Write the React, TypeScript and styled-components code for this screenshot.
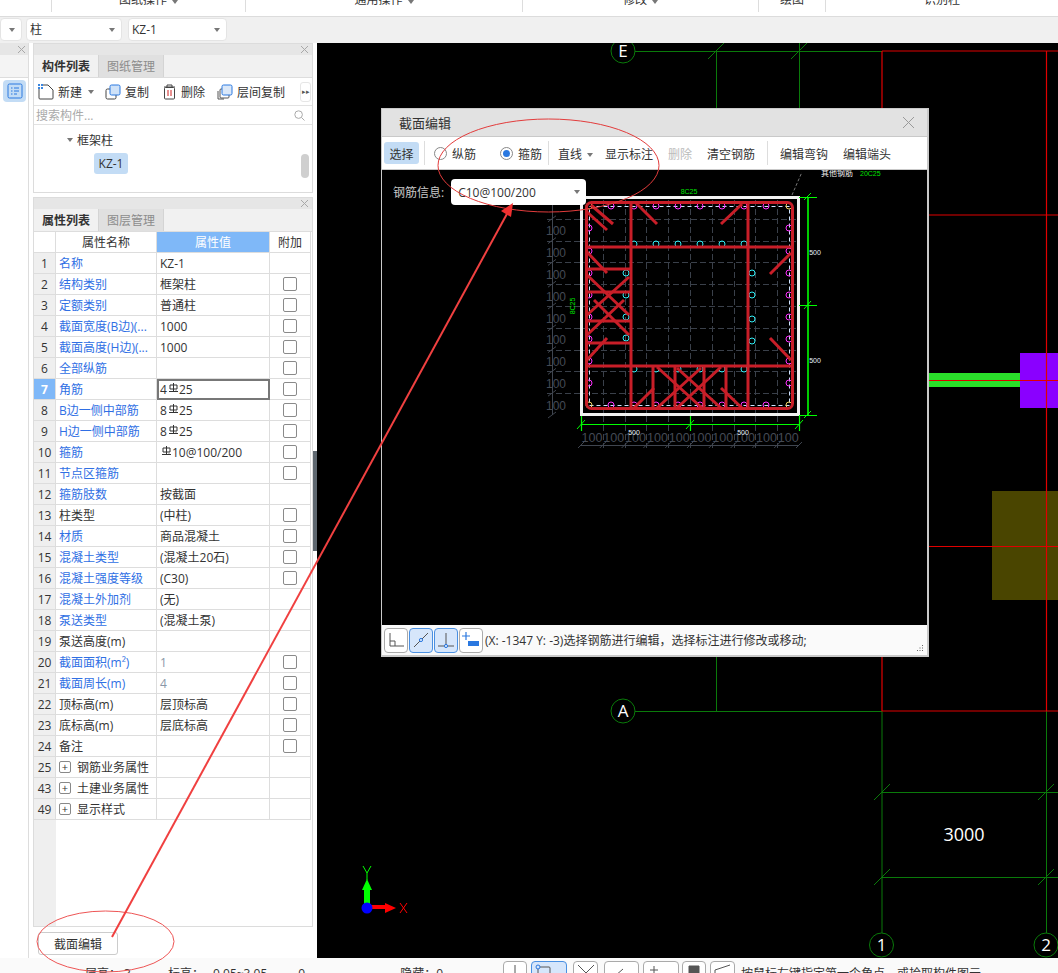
import React from "react";
import styled, { createGlobalStyle } from "styled-components";

const Global = createGlobalStyle`
  html, body { margin: 0; padding: 0; background: #fff; overflow: hidden; }
  * { box-sizing: border-box; }
  #root { width: 1058px; height: 973px; }
`;

const FONT = `"Open Sans", "Noto Sans CJK SC", sans-serif`;

const Page = styled.div`
  position: relative;
  width: 1058px;
  height: 973px;
  overflow: hidden;
  display: flex;
  flex-direction: column;
  font: 12px/18px ${FONT};
  color: #333;
  background: #fff;
`;

/* ---- ribbon ---- */
const Ribbon = styled.div`
  flex: 0 0 17px;
  display: flex;
  background: #fff;
  border-bottom: 1px solid #dcdcdc;
  overflow: hidden;
`;
const RibbonGroup = styled.div<{ $w: number }>`
  flex: 0 0 ${(p) => p.$w}px;
  height: 12px;
  border-right: 1px solid #ddd;
  display: flex;
  justify-content: center;
  gap: 5px;
  line-height: 14px;
  & > span { margin-top: -7px; white-space: nowrap; }
  &:last-child { border-right: none; }
`;
const Caret = styled.i`
  display: inline-block;
  width: 0;
  height: 0;
  border-left: 3px solid transparent;
  border-right: 3px solid transparent;
  border-top: 4px solid #777;
`;

/* ---- selector bar ---- */
const SelectorBar = styled.div`
  flex: 0 0 26px;
  display: flex;
  gap: 4px;
  padding-top: 1px;
  background: #f0f0f0;
`;
const Combo = styled.div<{ $w: number; $ml?: number }>`
  flex: 0 0 ${(p) => p.$w}px;
  margin-left: ${(p) => p.$ml ?? 0}px;
  height: 23px;
  background: #fff;
  border: 1px solid #e4e4e4;
  border-radius: 4px;
  display: flex;
  align-items: center;
  justify-content: space-between;
  padding: 0 6px 0 3px;
`;

/* ---- main ---- */
const Main = styled.div`
  flex: 0 0 915px;
  display: flex;
  min-height: 0;
`;
const Rail = styled.div`
  flex: 0 0 29px;
  border-right: 1px solid #ddd;
  display: flex;
  flex-direction: column;
`;
const RailHead = styled.div`
  height: 12px;
  background: #e6e6e6;
  display: flex;
  justify-content: flex-end;
  align-items: center;
  padding-right: 3px;
`;
const RailStrip = styled.div`
  height: 23px;
  background: #f4f4f4;
  border-bottom: 1px solid #ddd;
`;
const RailButton = styled.div`
  width: 23px;
  height: 22px;
  margin: 2px 0 0 3px;
  border-radius: 4px;
  background: #c3dcf5;
  display: flex;
  align-items: center;
  justify-content: center;
`;
const PanelColumn = styled.div`
  flex: 0 0 284px;
  padding-left: 4px;
  display: flex;
  flex-direction: column;
  gap: 4px;
`;
const Panel = styled.div<{ $h: number }>`
  flex: 0 0 ${(p) => p.$h}px;
  width: 280px;
  border: 1px solid #dcdcdc;
  display: flex;
  flex-direction: column;
  background: #fff;
  overflow: hidden;
`;
const PanelHead = styled.div`
  flex: 0 0 11px;
  background: #e6e6e6;
  display: flex;
  align-items: center;
  justify-content: flex-end;
  padding-right: 4px;
`;
const Tabs = styled.div`
  flex: 0 0 23px;
  height: 23px;
  display: flex;
  background: #f1f1f1;
  border-bottom: 1px solid #ddd;
`;
const Tab = styled.div<{ $on?: boolean }>`
  width: 65px;
  height: 22px;
  overflow: hidden;
  text-align: center;
  line-height: 24px;
  font-weight: ${(p) => (p.$on ? 700 : 400)};
  color: ${(p) => (p.$on ? "#333" : "#8c8c8c")};
  background: ${(p) => (p.$on ? "#f1f1f1" : "#e0e0e0")};
  border-right: 1px solid #d4d4d4;
`;
const Tools = styled.div`
  flex: 0 0 28px;
  display: flex;
  align-items: center;
  padding-left: 4px;
  border-bottom: 1px solid #e2e2e2;
  white-space: nowrap;
`;
const Tool = styled.div<{ $w: number }>`
  flex: 0 0 ${(p) => p.$w}px;
  display: flex;
  align-items: center;
  gap: 4px;
  & > span { padding-top: 2px; }
`;
const More = styled.div`
  width: 11px;
  height: 20px;
  margin-left: 11px;
  border: 1px solid #e6e6e6;
  border-radius: 3px;
  display: flex;
  align-items: center;
  justify-content: center;
  font-size: 7px;
  color: #555;
`;
const SearchRow = styled.div`
  flex: 0 0 19px;
  height: 19px;
  overflow: hidden;
  display: flex;
  align-items: center;
  justify-content: space-between;
  padding: 0 7px 0 2px;
  color: #aaa;
  border-bottom: 1px solid #e2e2e2;
  & > span { padding-top: 2px; line-height: 16px; }
`;
const Tree = styled.div`
  flex: 1;
  position: relative;
  padding: 5px 0 0 33px;
`;
const TreeNode = styled.div`
  display: flex;
  align-items: center;
  gap: 4px;
  height: 19px;
  & > span { padding-top: 2px; }
`;
const TreeLeaf = styled.div`
  width: 34px;
  height: 21px;
  margin: 4px 0 0 27px;
  border-radius: 3px;
  background: #c3dcf5;
  text-align: center;
  line-height: 22px;
`;
const Thumb = styled.div`
  position: absolute;
  right: 3px;
  top: 29px;
  width: 8px;
  height: 24px;
  border-radius: 4px;
  background: #cfcfcf;
`;

/* ---- grid ---- */
const Sheet = styled.div`
  flex: 1;
  display: flex;
  flex-direction: column;
  width: 277px;
`;
const SheetRow = styled.div`
  display: grid;
  grid-template-columns: 22px 101px 113px 41px;
  grid-template-rows: 21px;
  height: 21px;
  flex: 0 0 21px;
`;
const Cell = styled.div<{ $color?: string }>`
  border-right: 1px solid #ddd;
  border-bottom: 1px solid #ddd;
  padding: 2px 0 0 3px;
  line-height: 18px;
  white-space: nowrap;
  overflow: hidden;
  display: flex;
  align-items: center;
  color: ${(p) => p.$color ?? "#333"};
`;
const NumCell = styled(Cell)<{ $on?: boolean }>`
  padding: 2px 0 0;
  justify-content: center;
  background: ${(p) => (p.$on ? "#7fb8f8" : "#efefef")};
  color: ${(p) => (p.$on ? "#fff" : "#333")};
  font-weight: ${(p) => (p.$on ? 700 : 400)};
`;
const HeadCell = styled(Cell)<{ $on?: boolean }>`
  padding: 2px 0 0;
  justify-content: center;
  background: ${(p) => (p.$on ? "#7fb8f8" : "#fff")};
  color: ${(p) => (p.$on ? "#fff" : "#333")};
`;
const ValueCell = styled(Cell)<{ $sel?: boolean }>`
  ${(p) => (p.$sel ? "outline: 2px solid #777; outline-offset: -2px;" : "")}
`;
const CheckCell = styled(Cell)`
  padding: 0;
  justify-content: center;
`;
const Check = styled.div`
  width: 14px;
  height: 14px;
  border: 1px solid #8a8a8a;
  border-radius: 2px;
  background: #fff;
`;
const PlusBox = styled.span`
  width: 12px;
  height: 12px;
  margin: -2px 6px 0 0;
  border: 1px solid #888;
  border-radius: 2px;
  display: inline-flex;
  align-items: center;
  justify-content: center;
  font-size: 11px;
  line-height: 10px;
  flex: none;
`;
const SheetFill = styled.div`
  flex: 1;
  width: 22px;
  background: #efefef;
`;
const ActionButton = styled.div`
  width: 80px;
  height: 23px;
  margin-left: 5px;
  margin-top: 1px;
  border: 1px solid #ccc;
  border-radius: 3px;
  text-align: center;
  line-height: 23px;
  background: #fff;
`;
const SplitColumn = styled.div`
  flex: 0 0 4px;
  background: #fff;
  display: flex;
  align-items: flex-start;
`;
const SplitHandle = styled.div`
  width: 4px;
  height: 100px;
  margin-top: 408px;
  background: #5f6870;
`;

/* ---- canvas ---- */
const Canvas = styled.div`
  flex: 1;
  position: relative;
  background: #000;
  overflow: hidden;
`;
const Drawing = styled.svg`
  display: block;
`;

/* ---- dialog ---- */
const Dialog = styled.div`
  position: absolute;
  left: 64px;
  top: 65px;
  width: 548px;
  height: 549px;
  background: #c9c9c9;
  padding: 1px 2px 2px 1px;
  display: flex;
  flex-direction: column;
`;
const DialogTitle = styled.div`
  flex: 0 0 27px;
  background: #e2e2e2;
  display: flex;
  align-items: center;
  justify-content: space-between;
  padding: 0 13px 0 17px;
  font-size: 13px;
`;
const DialogTools = styled.div`
  flex: 0 0 33px;
  margin-top: 1px;
  background: #fff;
  border-bottom: 1px solid #c9c9c9;
  display: flex;
  align-items: center;
  padding-left: 2px;
  white-space: nowrap;
`;
const PickButton = styled.div`
  width: 35px;
  height: 22px;
  overflow: hidden;
  border-radius: 3px;
  background: #c3dcf5;
  text-align: center;
  line-height: 25px;
`;
const ToolSep = styled.div<{ $ml: number }>`
  width: 1px;
  height: 24px;
  margin-left: ${(p) => p.$ml}px;
  background: #ddd;
`;
const Radio = styled.span<{ $on?: boolean }>`
  width: 13px;
  height: 13px;
  border: 1px solid #888;
  border-radius: 50%;
  display: inline-flex;
  align-items: center;
  justify-content: center;
  background: #fff;
  &::after {
    content: "";
    width: 7px;
    height: 7px;
    border-radius: 50%;
    background: ${(p) => (p.$on ? "#2a78e0" : "transparent")};
  }
`;
const RadioLabel = styled.div<{ $ml: number }>`
  margin-left: ${(p) => p.$ml}px;
  display: flex;
  align-items: center;
  gap: 5px;
  & > span:last-child { padding-top: 3px; }
`;
const DialogText = styled.div<{ $ml: number; $off?: boolean }>`
  margin-left: ${(p) => p.$ml}px;
  padding-top: 3px;
  color: ${(p) => (p.$off ? "#bbb" : "#333")};
  display: flex;
  align-items: center;
  gap: 5px;
`;
const DialogStage = styled.div`
  flex: 0 0 455px;
  position: relative;
  background: #000;
`;
const RebarInfo = styled.div`
  position: absolute;
  left: 11px;
  top: 9px;
  display: flex;
  align-items: center;
  gap: 7px;
  color: #c8c8c8;
  & span { padding-top: 2px; }
`;
const RebarCombo = styled.div`
  width: 135px;
  height: 26px;
  background: #fff;
  border-radius: 4px;
  color: #333;
  display: flex;
  align-items: center;
  justify-content: space-between;
  padding: 0 6px 0 7px;
`;
const DialogFoot = styled.div`
  flex: 1;
  background: #fafafa;
  display: flex;
  align-items: center;
  gap: 1px;
  padding-left: 2px;
  position: relative;
  white-space: nowrap;
`;
const SnapButton = styled.div<{ $on?: boolean }>`
  width: 24px;
  height: 25px;
  border: 1px solid ${(p) => (p.$on ? "#4a90e2" : "#aaa")};
  border-radius: 4px;
  background: ${(p) => (p.$on ? "#d6e6fb" : "#fff")};
  display: flex;
  align-items: center;
  justify-content: center;
`;
const FootText = styled.div`
  margin-left: 1px;
  padding-top: 2px;
`;
const Grip = styled.svg`
  position: absolute;
  right: 3px;
  bottom: 3px;
`;

/* ---- status ---- */
const StatusBar = styled.div`
  flex: 0 0 15px;
  background: #fafafa;
  display: flex;
  align-items: flex-start;
  overflow: hidden;
  white-space: nowrap;
`;
const StatusText = styled.div<{ $ml: number }>`
  margin: 7px 0 0 ${(p) => p.$ml}px;
  line-height: 18px;
`;
const StatusTool = styled.div<{ $w: number; $ml: number; $on?: boolean }>`
  flex: 0 0 ${(p) => p.$w}px;
  height: 24px;
  margin: 3px 0 0 ${(p) => p.$ml}px;
  border: 1px solid ${(p) => (p.$on ? "#4a90e2" : "#aaa")};
  border-radius: 4px;
  background: ${(p) => (p.$on ? "#d6e6fb" : "#fff")};
  display: flex;
  justify-content: center;
  padding-top: 2px;
`;

const Overlay = styled.svg`
  position: absolute;
  left: 0;
  top: 0;
  pointer-events: none;
`;

/* ---- small icons ---- */
const Close = ({ s = 7, c = "#a8a8a8" }: { s?: number; c?: string }) => (
  <svg width={s} height={s} viewBox="0 0 7 7">
    <path d="M0 0L7 7M7 0L0 7" stroke={c} strokeWidth={7 / s} fill="none" />
  </svg>
);
const NewIcon = () => (
  <svg width="16" height="16" viewBox="0 0 16 16">
    <path d="M1 5V14a1 1 0 0 0 1 1H14a1 1 0 0 0 1-1V6L10 1H5" fill="#fff" stroke="#444" />
    <rect x="0" y="0" width="5" height="5" fill="#3a86e0" />
    <path d="M0 2.5H5M2.5 0V5" stroke="#fff" />
  </svg>
);
const CopyIcon = () => (
  <svg width="16" height="16" viewBox="0 0 16 16">
    <rect x="1" y="5" width="10" height="10" rx="1.5" fill="#fff" stroke="#444" />
    <rect x="5" y="1" width="10" height="10" rx="1.5" fill="#cfe2f8" stroke="#2a78e0" />
  </svg>
);
const TrashIcon = () => (
  <svg width="14" height="16" viewBox="0 0 14 16">
    <path d="M1 3H12M4 3V1H9V3" fill="none" stroke="#444" />
    <rect x="1.5" y="3.5" width="10" height="11.5" rx="1" fill="#fff" stroke="#444" />
    <path d="M5 6V12M8 6V12" stroke="#d02020" />
  </svg>
);
const FloorCopyIcon = () => (
  <svg width="16" height="16" viewBox="0 0 16 16">
    <path d="M1 7V15H7" fill="none" stroke="#555" />
    <rect x="3" y="5" width="9" height="9" rx="1" fill="#fff" stroke="#555" />
    <rect x="5" y="1" width="10" height="10" rx="1.5" fill="#dbe8f8" stroke="#2a78e0" />
  </svg>
);
const ListIcon = () => (
  <svg width="16" height="16" viewBox="0 0 16 16">
    <rect x="1" y="1" width="14" height="14" rx="1.5" fill="none" stroke="#2a78e0" />
    <path d="M4 5H5.5M7 5H12M4 8H5.5M7 8H12M4 11H5.5M7 11H10" stroke="#2a78e0" />
  </svg>
);
const SearchIcon = () => (
  <svg width="11" height="11" viewBox="0 0 11 11">
    <circle cx="4.6" cy="4.6" r="3.8" fill="none" stroke="#aaa" />
    <path d="M7.5 7.5L10.5 10.5" stroke="#aaa" />
  </svg>
);
const Rebar = () => (
  <svg width="11" height="10" viewBox="0 0 11 10" style={{ margin: "-5px 0 0 1px", flex: "none" }}>
    <path d="M2 2H9V6H2ZM5.5 0V8.5M1 8.5H10M8 7.5L9.5 9" fill="none" stroke="#333" strokeWidth="1" />
  </svg>
);

const StatusIcon = ({ d, w = 16, caret, dot, fill }: { d: string; w?: number; caret?: boolean; dot?: boolean; fill?: string }) => (
  <svg width={w} height="14" viewBox={`0 0 ${w} 14`}>
    <path d={d} fill={fill ?? "none"} stroke="#555" />
    {dot && <circle cx="3" cy="3" r="2" fill="#d6e6fb" stroke="#2a78e0" />}
    {caret && <path d={`M${w - 6} 9H${w}L${w - 3} 12Z`} fill="#666" />}
  </svg>
);

/* ---- data ---- */
const BLUE = "#2f6fe4";
type Row = { n: number; name: string; blue?: boolean; val?: React.ReactNode; chk?: boolean; plus?: boolean; gray?: boolean; sel?: boolean };
const rb = (pre: string, post: string) => (
  <>
    {pre}
    <Rebar />
    {post}
  </>
);
const rows: Row[] = [
  { n: 1, name: "名称", blue: true, val: "KZ-1" },
  { n: 2, name: "结构类别", blue: true, val: "框架柱", chk: true },
  { n: 3, name: "定额类别", blue: true, val: "普通柱", chk: true },
  { n: 4, name: "截面宽度(B边)(...", blue: true, val: "1000", chk: true },
  { n: 5, name: "截面高度(H边)(...", blue: true, val: "1000", chk: true },
  { n: 6, name: "全部纵筋", blue: true, chk: true },
  { n: 7, name: "角筋", blue: true, val: rb("4", "25"), chk: true, sel: true },
  { n: 8, name: "B边一侧中部筋", blue: true, val: rb("8", "25"), chk: true },
  { n: 9, name: "H边一侧中部筋", blue: true, val: rb("8", "25"), chk: true },
  { n: 10, name: "箍筋", blue: true, val: rb("", "10@100/200"), chk: true },
  { n: 11, name: "节点区箍筋", blue: true, chk: true },
  { n: 12, name: "箍筋肢数", blue: true, val: "按截面" },
  { n: 13, name: "柱类型", val: "(中柱)", chk: true },
  { n: 14, name: "材质", blue: true, val: "商品混凝土", chk: true },
  { n: 15, name: "混凝土类型", blue: true, val: "(混凝土20石)", chk: true },
  { n: 16, name: "混凝土强度等级", blue: true, val: "(C30)", chk: true },
  { n: 17, name: "混凝土外加剂", blue: true, val: "(无)" },
  { n: 18, name: "泵送类型", blue: true, val: "(混凝土泵)" },
  { n: 19, name: "泵送高度(m)" },
  { n: 20, name: "截面面积(m²)", blue: true, val: "1", gray: true, chk: true },
  { n: 21, name: "截面周长(m)", blue: true, val: "4", gray: true, chk: true },
  { n: 22, name: "顶标高(m)", val: "层顶标高", chk: true },
  { n: 23, name: "底标高(m)", val: "层底标高", chk: true },
  { n: 24, name: "备注", chk: true },
  { n: 25, name: "钢筋业务属性", plus: true },
  { n: 43, name: "土建业务属性", plus: true },
  { n: 49, name: "显示样式", plus: true },
];

const GREEN = "#0a7a0a";
const RED = "#e00000";

const AxisBubble = ({ x, y, t, size = 17 }: { x: number; y: number; t: string; size?: number }) => (
  <g>
    <circle cx={x} cy={y} r={12} fill="#000" stroke={GREEN} strokeWidth="1" />
    <text x={x} y={y + 6} fontSize={size} fill="#fff" textAnchor="middle" fontFamily="Open Sans, sans-serif">
      {t}
    </text>
  </g>
);

const Slash = ({ x, y }: { x: number; y: number }) => (
  <path d={`M${x - 8} ${y + 8}L${x + 8} ${y - 8}`} stroke={GREEN} strokeWidth="1" />
);

const CadDrawing = () => (
  <Drawing width="741" height="915" viewBox="317 43 741 915">
    <g strokeWidth="1" fill="none">
      <path d={`M634 51.5H882M716.5 51V108M799.5 43V108M716.5 656V711M634 711.5H882M882 711V935M1046.5 711V935`} stroke={GREEN} />
      <path d="M882 792.5H1058M882 877.5H1058" stroke={GREEN} />
    </g>
    <Slash x={882} y={792} />
    <Slash x={1046} y={792} />
    <Slash x={882} y={877} />
    <Slash x={1046} y={877} />
    <Slash x={716} y={51} />
    <Slash x={799} y={51} />
    <rect x="929" y="373" width="91" height="14" fill="#2adf2a" />
    <rect x="1020" y="353" width="38" height="55" fill="#8a00ff" />
    <rect x="992" y="491" width="66" height="109" fill="#4a4500" />
    <g stroke={RED} fill="none" strokeWidth="1">
      <path d="M882 51H1058M882 51V108M882 656V711H1058" strokeWidth="1.2" />
      <path d="M1046.5 51V711" strokeWidth="1.2" />
      <path d="M929 215H1058M929 380.5H1058M929 546.5H1058" />
    </g>
    <AxisBubble x={623} y={51} t="E" />
    <AxisBubble x={623} y={711} t="A" />
    <AxisBubble x={881.5} y={945} t="1" />
    <AxisBubble x={1046} y={945} t="2" />
    <text x="964" y="841" fontSize="18" fill="#fff" textAnchor="middle" fontFamily="Open Sans, sans-serif">
      3000
    </text>
    <path d="M367 907V887" stroke="#00ff00" strokeWidth="6" />
    <path d="M367 879L372 890H362Z" fill="#00ff00" />
    <path d="M367 907H386" stroke="#ff0000" strokeWidth="4" />
    <path d="M396 908L385 903V913Z" fill="#ff0000" />
    <circle cx="367" cy="908" r="5.5" fill="#0000ff" />
    <path d="M363 866L367 873L371 866M367 873V880" stroke="#00ff00" fill="none" />
    <path d="M400 903L407 913M407 903L400 913" stroke="#ff0000" fill="none" />
  </Drawing>
);

const STEEL = "#c81e28";
const gridV = Array.from({ length: 11 }, (_, i) => 582 + i * 21.8);
const gridH = Array.from({ length: 11 }, (_, i) => 197 + i * 21.8);
const perim = [612, 635, 657, 679, 701, 723, 745, 767];
const sideY = [228, 251, 273, 295, 317, 339, 361, 383];
const cyanX = [635, 657, 679, 701, 723, 745];
const steelLines: number[][] = [
  [632, 202, 632, 408], [749, 202, 749, 408], [587, 247, 793, 247], [587, 366, 793, 366],
  [587, 269, 632, 269], [587, 292, 632, 292], [587, 321, 632, 321], [587, 343, 632, 343],
  [588, 275, 630, 315], [630, 277, 588, 315], [595, 300, 630, 335], [588, 335, 625, 300],
  [592, 205, 614, 224], [588, 212, 608, 230], [637, 203, 658, 224], [743, 204, 722, 224],
  [588, 252, 608, 273], [792, 253, 771, 274], [608, 338, 588, 360], [771, 338, 792, 360],
  [655, 388, 635, 408], [722, 388, 743, 408], [654, 366, 654, 408], [676, 366, 676, 408],
  [705, 366, 705, 408], [727, 366, 727, 408], [658, 367, 703, 408], [722, 367, 678, 408],
  [658, 408, 702, 368], [678, 368, 722, 408],
];

const SectionDrawing = () => (
  <Drawing width="544" height="455" viewBox="383 170 544 455">
    <g stroke="#3a404a" strokeWidth="1" strokeDasharray="6 3" fill="none">
      {gridH.slice(1, 10).map((y) => (
        <path key={y} d={`M548 ${Math.round(y) + 0.5}H797`} />
      ))}
      {gridV.slice(1, 10).map((x) => (
        <path key={x} d={`M${Math.round(x) + 0.5} 200V448`} />
      ))}
    </g>
    <g stroke="#3f454f" strokeWidth="1" fill="none">
      <path d="M553.5 197V415M582 445.5H800" />
      {gridH.map((y) => (
        <path key={y} d={`M549 ${y + 3}L557 ${y - 3}`} />
      ))}
      {gridV.map((x) => (
        <path key={x} d={`M${x - 3} 448L${x + 3} 442`} />
      ))}
    </g>
    <g fill="#444a55" fontSize="13" fontFamily="Liberation Sans, sans-serif">
      {[230, 252, 274, 296, 318, 339, 361, 383, 405].map((y) => (
        <text key={y} x="547" y={y + 5} textLength="20" lengthAdjust="spacingAndGlyphs">
          100
        </text>
      ))}
      {gridV.slice(0, 10).map((x) => (
        <text key={x} x={x + 0.5} y="442" textLength="21" lengthAdjust="spacingAndGlyphs">
          100
        </text>
      ))}
    </g>
    <rect x="582.5" y="197.5" width="217" height="217" fill="none" stroke="#f2f2f2" strokeWidth="3" />
    <rect x="590.5" y="206.5" width="200" height="199" fill="none" stroke="#cfe4ff" strokeWidth="1" strokeDasharray="4 3" />
    <g fill="none" strokeWidth="1" stroke="#ff30ff">
      {perim.map((x) => (
        <React.Fragment key={x}>
          <circle cx={x} cy="206" r="3" />
          <circle cx={x} cy="405" r="3" />
        </React.Fragment>
      ))}
      {sideY.map((y) => (
        <React.Fragment key={y}>
          <circle cx="590" cy={y} r="3" />
          <circle cx="790" cy={y} r="3" />
        </React.Fragment>
      ))}
    </g>
    <g fill="none" strokeWidth="1" stroke="#30f0f8">
      {cyanX.map((x) => (
        <React.Fragment key={x}>
          <circle cx={x} cy="244" r="3" />
          <circle cx={x} cy="369" r="3" />
        </React.Fragment>
      ))}
      {[273, 295, 317, 338].map((y) => (
        <circle key={y} cx="627" cy={y} r="3" />
      ))}
      {[273, 295, 319, 341].map((y) => (
        <circle key={y} cx="753" cy={y} r="3" />
      ))}
    </g>
    <g fill="none" strokeWidth="1" stroke="#f0d060">
      <circle cx="590" cy="206" r="3" />
      <circle cx="790" cy="206" r="3" />
      <circle cx="590" cy="405" r="3" />
      <circle cx="790" cy="405" r="3" />
    </g>
    <rect x="587.5" y="202.5" width="206" height="206" rx="5" fill="none" stroke={STEEL} strokeWidth="3" />
    <g stroke={STEEL} strokeWidth="3">
      {steelLines.map((l, i) => (
        <line key={i} x1={l[0]} y1={l[1]} x2={l[2]} y2={l[3]} />
      ))}
    </g>
    <g stroke="#00ff00" fill="none">
      <path d="M809 197V415" strokeWidth="1.6" />
      <path d="M582 424.5H800M582.5 416V431M691.5 416V431M800.5 416V431M800 197.5H818M800 305.5H818M800 415.5H818" strokeWidth="1.2" />
      <path d="M578 429L586 420M687 429L695 420M796 429L804 420M805 200L812 193M805 309L812 301M805 418L812 411" strokeWidth="1" />
    </g>
    <path d="M793 195L803 172" stroke="#777" strokeDasharray="3 2" fill="none" />
    <g fontSize="7" fontFamily="Liberation Sans, sans-serif">
      <text x="690" y="194" fill="#00e000" textAnchor="middle">8C25</text>
      <text x="0" y="0" fill="#00e000" textAnchor="middle" transform="translate(576 306) rotate(-90)">8C25</text>
      <text x="816" y="255" fill="#e8f2ff" textAnchor="middle">500</text>
      <text x="816" y="363" fill="#e8f2ff" textAnchor="middle">500</text>
      <text x="635" y="435" fill="#e8f2ff" textAnchor="middle">500</text>
      <text x="744" y="435" fill="#e8f2ff" textAnchor="middle">500</text>
      <text x="861" y="176" fill="#00e000">20C25</text>
    </g>
    <text x="822" y="176" fontSize="8" fill="#f0f0f0" fontFamily={FONT}>其他钢筋</text>
  </Drawing>
);

const Snap1 = () => (
  <svg width="20" height="20" viewBox="0 0 20 20">
    <path d="M4 3V16H18M4 11H9V16" fill="none" stroke="#555" />
  </svg>
);
const Snap2 = () => (
  <svg width="20" height="20" viewBox="0 0 20 20">
    <path d="M3 17L17 3" fill="none" stroke="#555" />
    <circle cx="10" cy="10" r="1.6" fill="#d6e6fb" stroke="#2a78e0" />
  </svg>
);
const Snap3 = () => (
  <svg width="20" height="20" viewBox="0 0 20 20">
    <path d="M10 3V16M2 16H18" fill="none" stroke="#555" />
    <circle cx="10" cy="16" r="1.6" fill="#d6e6fb" stroke="#2a78e0" />
  </svg>
);
const Snap4 = () => (
  <svg width="20" height="20" viewBox="0 0 20 20">
    <path d="M1 6H9M5 2V10" stroke="#2a78e0" strokeWidth="1.2" fill="none" />
    <rect x="7" y="11" width="11" height="5" fill="#2a78e0" />
  </svg>
);

export default function App() {
  return (
    <Page>
      <Global />
      <Ribbon>
        <RibbonGroup $w={52} />
        <RibbonGroup $w={194}>
          <span>图纸操作</span>
          <Caret />
        </RibbonGroup>
        <RibbonGroup $w={277}>
          <span>通用操作</span>
          <Caret />
        </RibbonGroup>
        <RibbonGroup $w={236}>
          <span>修改</span>
          <Caret />
        </RibbonGroup>
        <RibbonGroup $w={67}>
          <span>绘图</span>
        </RibbonGroup>
        <RibbonGroup $w={232}>
          <span>识别柱</span>
        </RibbonGroup>
      </Ribbon>
      <SelectorBar>
        <Combo $w={22} $ml={0}>
          <span />
          <Caret />
        </Combo>
        <Combo $w={96}>
          <span>柱</span>
          <Caret />
        </Combo>
        <Combo $w={99} $ml={2}>
          <span>KZ-1</span>
          <Caret />
        </Combo>
      </SelectorBar>
      <Main>
        <Rail>
          <RailHead>
            <Close />
          </RailHead>
          <RailStrip />
          <RailButton>
            <ListIcon />
          </RailButton>
        </Rail>
        <PanelColumn>
          <Panel $h={150}>
            <PanelHead>
              <Close />
            </PanelHead>
            <Tabs>
              <Tab $on>构件列表</Tab>
              <Tab>图纸管理</Tab>
            </Tabs>
            <Tools>
              <Tool $w={67}>
                <NewIcon />
                <span>新建</span>
                <Caret style={{ marginLeft: 2 }} />
              </Tool>
              <Tool $w={58}>
                <CopyIcon />
                <span>复制</span>
              </Tool>
              <Tool $w={54}>
                <TrashIcon />
                <span>删除</span>
              </Tool>
              <Tool $w={72}>
                <FloorCopyIcon />
                <span>层间复制</span>
              </Tool>
              <More>▸▸</More>
            </Tools>
            <SearchRow>
              <span>搜索构件...</span>
              <SearchIcon />
            </SearchRow>
            <Tree>
              <TreeNode>
                <Caret />
                <span>框架柱</span>
              </TreeNode>
              <TreeLeaf>KZ-1</TreeLeaf>
              <Thumb />
            </Tree>
          </Panel>
          <Panel $h={730}>
            <PanelHead>
              <Close />
            </PanelHead>
            <Tabs>
              <Tab $on>属性列表</Tab>
              <Tab>图层管理</Tab>
            </Tabs>
            <Sheet>
              <SheetRow>
                <HeadCell />
                <HeadCell>属性名称</HeadCell>
                <HeadCell $on>属性值</HeadCell>
                <HeadCell>附加</HeadCell>
              </SheetRow>
              {rows.map((r) => (
                <SheetRow key={r.n}>
                  <NumCell $on={r.sel}>{r.n}</NumCell>
                  <Cell $color={r.blue ? BLUE : undefined}>
                    {r.plus && <PlusBox>+</PlusBox>}
                    {r.name}
                  </Cell>
                  <ValueCell $sel={r.sel} $color={r.gray ? "#8a97a8" : undefined}>
                    {r.val}
                  </ValueCell>
                  <CheckCell>{r.chk && <Check />}</CheckCell>
                </SheetRow>
              ))}
              <SheetFill />
            </Sheet>
          </Panel>
          <ActionButton>截面编辑</ActionButton>
        </PanelColumn>
        <SplitColumn>
          <SplitHandle />
        </SplitColumn>
        <Canvas>
          <CadDrawing />
          <Dialog>
            <DialogTitle>
              <span>截面编辑</span>
              <Close s={11} c="#999" />
            </DialogTitle>
            <DialogTools>
              <PickButton>选择</PickButton>
              <ToolSep $ml={5} />
              <RadioLabel $ml={9}>
                <Radio />
                <span>纵筋</span>
              </RadioLabel>
              <RadioLabel $ml={24}>
                <Radio $on />
                <span>箍筋</span>
              </RadioLabel>
              <ToolSep $ml={6} />
              <DialogText $ml={9}>
                <span>直线</span>
                <Caret />
              </DialogText>
              <DialogText $ml={12}>显示标注</DialogText>
              <DialogText $ml={15} $off>
                删除
              </DialogText>
              <DialogText $ml={15}>清空钢筋</DialogText>
              <ToolSep $ml={12} />
              <DialogText $ml={12}>编辑弯钩</DialogText>
              <DialogText $ml={15}>编辑端头</DialogText>
            </DialogTools>
            <DialogStage>
              <SectionDrawing />
              <RebarInfo>
                <span>钢筋信息:</span>
                <RebarCombo>
                  <span>C10@100/200</span>
                  <Caret />
                </RebarCombo>
              </RebarInfo>
            </DialogStage>
            <DialogFoot>
              <SnapButton>
                <Snap1 />
              </SnapButton>
              <SnapButton $on>
                <Snap2 />
              </SnapButton>
              <SnapButton $on>
                <Snap3 />
              </SnapButton>
              <SnapButton>
                <Snap4 />
              </SnapButton>
              <FootText>(X: -1347 Y: -3)选择钢筋进行编辑，选择标注进行修改或移动;</FootText>
              <Grip width="8" height="8" viewBox="0 0 8 8">
                <path d="M6 1h1v1H6zM3.5 3.5h1v1h-1zM6 3.5h1v1H6zM1 6h1v1H1zM3.5 6h1v1h-1zM6 6h1v1H6z" fill="#666" />
              </Grip>
            </DialogFoot>
          </Dialog>
        </Canvas>
      </Main>
      <StatusBar>
        <StatusText $ml={85}>层高： 3</StatusText>
        <StatusText $ml={37}>标高：</StatusText>
        <StatusText $ml={9}>0.05~3.05</StatusText>
        <StatusText $ml={31}>0</StatusText>
        <StatusText $ml={95}>隐藏：0</StatusText>
        <StatusTool $w={24} $ml={60}>
          <StatusIcon w={8} d="M4 1V14" />
        </StatusTool>
        <StatusTool $w={36} $ml={4} $on>
          <StatusIcon w={28} caret dot d="M3 3H14a1 1 0 0 1 1 1V14M3 3V14" />
        </StatusTool>
        <StatusTool $w={25} $ml={6}>
          <StatusIcon w={18} d="M1 1L9 9L17 1" />
        </StatusTool>
        <StatusTool $w={35} $ml={6}>
          <StatusIcon w={26} caret d="M6 12L14 5" />
        </StatusTool>
        <StatusTool $w={36} $ml={4}>
          <StatusIcon w={26} caret d="M6 2V10M2 6H10" />
        </StatusTool>
        <StatusTool $w={24} $ml={3}>
          <StatusIcon w={14} d="M2 2H12V14H2Z" fill="#555" />
        </StatusTool>
        <StatusTool $w={25} $ml={4}>
          <StatusIcon w={18} d="M1 14V6L16 1" />
        </StatusTool>
        <StatusText $ml={6}>按鼠标左键指定第一个角点，或拾取构件图元</StatusText>
      </StatusBar>
      <Overlay width="1058" height="973" viewBox="0 0 1058 973">
        <ellipse cx="548.5" cy="165.5" rx="110.5" ry="46.5" fill="none" stroke="#e23c3c" strokeWidth="1" />
        <ellipse cx="105.5" cy="941.5" rx="68.5" ry="30.5" fill="none" stroke="#ee5555" strokeWidth="1" />
        <path d="M112 937L508 212" stroke="#f04040" strokeWidth="2" fill="none" />
        <path d="M513 203L511 217L501 211Z" fill="#f03030" />
      </Overlay>
    </Page>
  );
}
